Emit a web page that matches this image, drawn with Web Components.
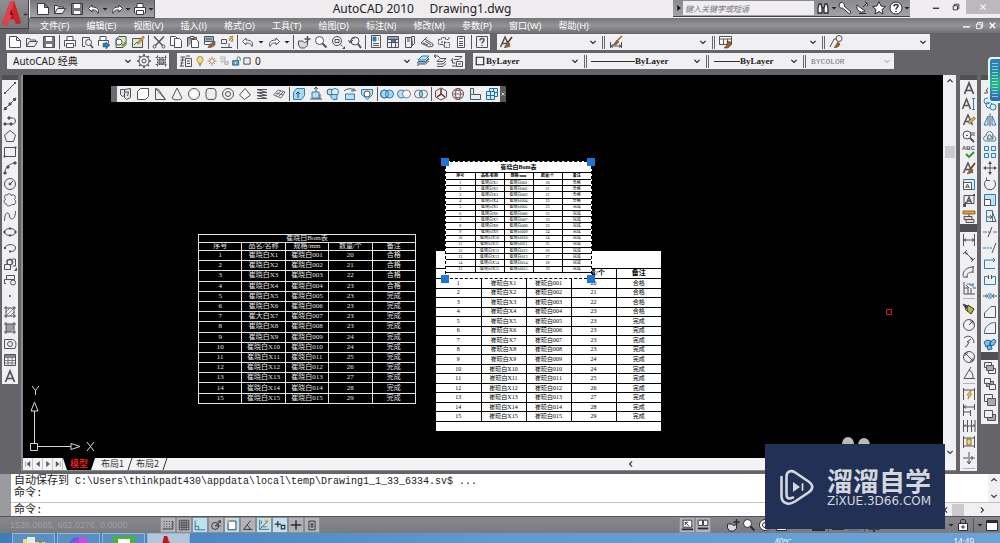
<!DOCTYPE html>
<html lang="zh-CN">
<head>
<meta charset="utf-8">
<meta name="viewport" content="width=device-width, initial-scale=1">
<title>AutoCAD 2010 Drawing1.dwg</title>
<style>
  html, body { margin: 0; height: 100%; overflow: hidden; background: #656468; }
  body { font-family: "Noto Sans", "Noto Sans CJK SC", sans-serif; font-size: 10px; color: #222; }
</style>
</head>
<body>
<cad-app></cad-app>

<script>
/* ---------- icon library: 16 x 16 line drawings ---------- */
const page = '<path d="M2.500 2.500h7l4 4v7h-11zM9.500 2.500v4h4" fill="#fff"/>';
const brush = '<path d="M14 3L9.500 9" stroke="#5a3a1c" stroke-width="1.500"/><path d="M10 8l2 2c-1 3-4 4-6 3.500 2-1 2-4 4-5.500z" fill="#a0622c" stroke="#5a3a1c" stroke-width=".6"/>';
const mag = '<circle cx="6.500" cy="6.500" r="4" fill="#fff"/><path d="M9.500 9.500l4 4" stroke-width="2"/>';
const A = '<path d="M2.500 13L7 3l4.500 10M4 9.500h6" stroke-width="1.500"/>';
const ICONS = {
  new: page,
  open: '<path d="M2.500 12.500v-8h3l1 1.500h5v2M2.500 12.500l3-5h8l-3 5z" fill="#e9edf2"/>',
  save: '<path d="M2.500 2.500h11v11h-11z" fill="#77777e"/><path d="M5 3h6v4H5zM5 10h6v3H5z" fill="#fff" stroke="none"/>',
  undo: '<path d="M6 4L2.500 7.500 6 11V9c4-.5 5 1 6 3.500C13.500 8 10.500 6 6 6z" fill="#fff"/>',
  redo: '<path d="M10 4l3.500 3.500L10 11V9c-4-.5-5 1-6 3.500C2.500 8 5.500 6 10 6z" fill="#fff"/>',
  print: '<path d="M5 6V2.500h6V6M3.500 12h-1V6.500h11V12h-1" fill="#fff"/><path d="M4.500 9.500h7v4h-7z" fill="#fff"/>',
  preview: '<path d="M10.500 3.500h-7v9H6M10.500 3.500v2" /><circle cx="9.500" cy="8.500" r="3"/><path d="M11.500 11l2.500 3" stroke-width="1.800"/>',
  publish: '<path d="M4 6V2.500h6V6M3 11.500h-.5V6.500h10V9" fill="#fff"/><path d="M7 9v4h3v2l4-4-4-3v1z" fill="#2a7fb4" stroke="#1a5a8a" stroke-width=".5"/>',
  dwf: '<path d="M3 5l3-2.500h7v8l-3 3H3z" fill="#dfe8c8"/><circle cx="6" cy="8" r="3" fill="#fff"/><path d="M9 12l4-4" stroke="#6f9a2c" stroke-width="2"/>',
  markup: '<path d="M2.500 4.500h10v9h-10z" fill="#d6e8da"/><path d="M4 11l3-3 2 2" stroke="#38853c"/><path d="M7 9l6-7 1.500 1.500-6 6.500z" fill="#e0a63a" stroke="#8a5a1a" stroke-width=".6"/>',
  cut: '<path d="M3 2.500l8.500 9M13 2.500L4.500 11.500" stroke-width="1.400"/><circle cx="3.500" cy="12.500" r="1.500"/><circle cx="12.500" cy="12.500" r="1.500"/>',
  copy: '<path d="M2.500 2.500h5l2 2v7h-7z" fill="#fff"/><path d="M6.500 4.500h5l2 2v7h-7z" fill="#fff"/>',
  paste: '<path d="M3 12.500h-.5v-9h9V5" fill="#a6a6ac"/><path d="M5 2.500h4v2H5z" fill="#fff"/><path d="M6.500 5.500h5l2 2v6h-7z" fill="#fff"/>',
  match: '<path d="M2.500 2.500h9v5h-9zM4 5h6" fill="#8cb9d6"/><path d="M2.500 7.500h9v3h-9z" fill="#fff"/><path d="M8 10l5-3v4c-2 2-5 3-7 2.500z" fill="#a0622c" stroke-width=".6"/>',
  block: '<path d="M2.500 9.500v-4h5v4zM5 13.500h5v-4M2 13.500h11M10 7l4-4M11 2l3 4M13 8V6" /><path d="M10 6l4-4" stroke="#e2a02c" stroke-width="2"/>',
  pan: '<path d="M2.500 7h4l2 1.500 3-1v4l-3 2.500h-4l-2-3z" fill="#dadade"/><path d="M11.500 2v6M8.500 5h6" stroke-width="1.500"/>',
  zoom: mag,
  zoomwin: '<circle cx="7" cy="7" r="4.500"/><path d="M5 5.500h4v3H5zM10.500 10.500l2 2"/><path d="M12 15h3v-3z" fill="currentColor" stroke="none"/>',
  zoomprev: '<circle cx="8" cy="7" r="4"/><path d="M11 10l3 4" stroke-width="2"/><path d="M6 6L3 9 1.500 6" /><path d="M3 9c0-3 2-5 5-5"/>',
  props: '<path d="M3.500 1.500h9v12h-9z" fill="#fff"/><path d="M5 3h3v4H5z" fill="#2a7fb4" stroke="#2a7fb4"/><path d="M10 4h1M10 6h1M5 9.500h6M5 11.500h6"/>',
  grid: '<path d="M2.500 2.500h11v11h-11zM2.500 5.500h11M6.500 5.500v8M10.500 5.500v8M2.500 8.500h11" /><path d="M7 6h3v2H7z" fill="#2a7fb4" stroke="none"/><path d="M3 3h10v2H3z" fill="#99c" stroke="none"/>',
  palette: '<path d="M3.500 3.500h6v10h-6zM9.500 2.500h3v7l-2 2zM5 5h3M5 7h3"/>',
  sheet: '<path d="M2 9l4-4 8 5v2l-4 1zM4 9l5 2M6 7l6 4M6 5l2-2"/>',
  markupset: '<path d="M2.500 5.500h3v-2h4v2h3M2.500 5.500v5h3M8.500 8.500h5v5h-5zM5 8h4M5 10.500h3v3M13 3v3" stroke-dasharray="2 1"/>',
  calc: '<path d="M4.500 2.500h7v11h-7z" fill="#fff"/><path d="M6 4.500h4M6 7.500h4M6 9.500h4M6 11.500h4"/>',
  help: '<path d="M2.500 2.500h11v11h-11z"/><path d="M6 6.500c0-3 4-2.500 4-.5 0 1.500-2 1.500-2 3.500M8 11v1" stroke-width="1.500"/>',
  textstyle: A + brush, dimstyle: '<path d="M2.500 8v6M13.500 8v6M2.500 12h11M5 10.500L2.500 12 5 13.500M11 10.500l2.500 1.500-2.500 1.500"/><path d="M14 2L9 7" stroke="#9a5a22" stroke-width="1.500"/><path d="M9 6l2 2-3 3H5z" fill="#a0622c" stroke-width=".5"/>',
  tablestyle: '<path d="M1.500 2.500h12v8h-12zM1.500 5h12M5.500 5v5.500M9.500 5v5.500" fill="#fff"/><path d="M9 7l4 1v3l-3 3H6l3-3z" fill="#a0622c" stroke="#5a3a1c" stroke-width=".6"/>',
  leader: '<path d="M2 13l4-8h3"/><circle cx="11" cy="4.500" r="3"/><path d="M10 8l2 2c-1 3-4 4-6 3.500 2-1 2-4 4-5.500z" fill="#a0622c" stroke="#5a3a1c" stroke-width=".6"/>',
  gear: '<circle cx="8" cy="8" r="2"/><circle cx="8" cy="8" r="5"/><path d="M8 1v2M8 13v2M1 8h2M13 8h2M3 3l1.500 1.500M11.500 11.500L13 13M13 3l-1.500 1.500M3 13l1.500-1.500" stroke-width="1.600"/>',
  workspace: '<path d="M2.500 4.500h11M4.500 2.500v11M2.500 11.500h11M12.500 2.500v11" stroke-dasharray="2 1"/><path d="M6 6h5v5H6z" fill="#9a9aa0"/>',
  layers: '<path d="M2.500 4h5M2.500 7h4M2.500 10h3M2 13h4M5 4L3 13M7.500 5.500h6v8h-6zM9 8h3M9 10.500h3M8 3h4"/>',
  bulb: '<path d="M6 11c0-2-2-3-2-5a4 4 0 018 0c0 2-2 3-2 5z" fill="#f7dc7a" stroke="#8a742a"/><path d="M6.500 12.500h3M7 14.500h2"/>',
  sun: '<circle cx="8" cy="8" r="3" fill="#fff3cf" stroke="#8a6a3a"/><path d="M8 2v2M8 12v2M2 8h2M12 8h2M4 4l1 1M11 11l1 1M12 4l-1 1M4 12l1-1" stroke="#8a6a3a"/>',
  freeze: '<path d="M3.500 2.500h6v3h-6zM3.500 8.500h5v-3M5 8v3M9.500 8.500h4v4h-4z" stroke="#aaa7ae"/><circle cx="11" cy="11" r="2" stroke="#aaa7ae"/>',
  unlock: '<path d="M3.500 7.500h8v6h-8z" fill="#5fa4cf" stroke="#1b4f78"/><path d="M9.500 7V4c0-2 4-2 4 0v4"/><path d="M7.500 9v3" stroke="#fff"/>',
  square: '<path d="M3 3h10v10H3z" stroke-width="1.500"/>',
  layerstack: '<path d="M3 7l4-4h7l-4 4z" fill="#b9e0f3" stroke="#2a7fb4"/><path d="M2.500 10l1-1.500h7L14 5M2.500 13l1-2h7L14 8" fill="none"/><path d="M2 10h8l4-4" stroke="#2a7fb4"/>',
  layerprev: '<path d="M2 3h4l2 2M4 1.500L2 3l2 2M8 5.500h6l-3 3H5zM5 11h6l3-3M5 13.500h6l3-3"/>',
  layerstate: '<path d="M6 3.500h7l-3 3H5M3.500 7v3h3M7.500 8.500h6v5h-6zM9 11h3M3 13h4M4 5l-2 3"/>',
  polysolid: '<path d="M2.500 3.500h4v6l-2 1-2-2zM6.500 3.500l6-1v9l-4 2-2-2V6h4l-1 4" fill="#e4e4e8"/>',
  boxs: '<path d="M2.500 5.500l3-3h8v8l-3 3h-8z" fill="#fff"/>' , wedge: '<path d="M3.500 2.500v11h10zM3.500 2.500l3 1 7 10"/>',
  cone: '<path d="M8 2L3 12c1 2.500 9 2.500 10 0z" fill="#eee"/>', sphere: '<circle cx="8" cy="8" r="5.500" fill="#fff"/>',
  cylinder: '<rect x="3" y="2.500" width="10" height="11" rx="3" fill="#eeeef0"/>', torus: '<circle cx="8" cy="8" r="5.500"/><circle cx="8" cy="8" r="2.500"/>',
  pyramid: '<path d="M8 2.500L2.500 9l5 4.500 6-4.500z" fill="#f8f8f8"/>',
  helix: '<path d="M3 3.500h10M3 6.500h10M3 9.500h10M3 12.500h10M3 3.500l10 3M3 6.500l10 3M3 9.500l10 3"/>',
  planar: '<path d="M2.500 9L7 4l7 2-4 6zM5 9.500L10 5M7.500 10.500L12 6M5 7l7 2" stroke-width=".8"/>',
  extrude: '<path d="M2.500 6.500l3-4h8v7l-3 4h-8z" fill="#a8d8f0" stroke="#2a7fb4"/><path d="M7 6v6M5 8l2-2 2 2" stroke="#155"/>',
  presspull: '<path d="M4 6h7v6H4z" fill="#b9e0f3" stroke="#2a7fb4"/><path d="M8 1v5M6 3l2-2 2 2M2 13h12M12 8v5"/>',
  sweep: '<circle cx="5" cy="6" r="3" fill="#b9e0f3"/><circle cx="10" cy="6" r="3.500" fill="#dff0f8" stroke="#2a7fb4"/><path d="M6 8.500h6v5H8l-2-2z" fill="#a8d8f0" stroke="#2a7fb4"/>',
  revolve: '<path d="M3.500 8h9v5.500h-9z" fill="#b9e0f3" stroke="#2a7fb4"/><path d="M2 5c3-3 9-3 12 0M12 2.500V5h-3"/>',
  loft: '<path d="M2.500 3.500h11v5l-5 5-6-5z" fill="#b9e0f3" stroke="#2a7fb4"/><circle cx="8" cy="8" r="3" fill="#fff"/>',
  union: '<circle cx="5.500" cy="8" r="4" fill="#a8d8f0" stroke="#2a7fb4"/><circle cx="10.500" cy="8" r="4" fill="#a8d8f0" stroke="#2a7fb4"/><circle cx="5.500" cy="8" r="4" stroke="#2a7fb4"/>',
  subtract: '<circle cx="5.500" cy="8" r="4" fill="#b9e0f3" stroke="#2a7fb4"/><circle cx="10.500" cy="8" r="4" fill="#f8f8f8" stroke="#77808a"/>',
  intersect: '<circle cx="5.500" cy="8" r="4" stroke="#66707a"/><circle cx="10.500" cy="8" r="4" stroke="#66707a"/><ellipse cx="8" cy="8" rx="1.500" ry="3" fill="#a8d8f0" stroke="#2a7fb4"/>',
  ucs3d: '<path d="M8 2l5.500 3v6L8 14l-5.500-3V5z"/><path d="M8 3v5l-4 3M8 8l4 3" stroke="#7b2020" stroke-width="1.500"/>',
  orbit: '<circle cx="8" cy="8" r="5.500" stroke="#555"/><ellipse cx="8" cy="8" rx="2.500" ry="5.500" stroke="#a33"/><path d="M2.500 8h11M4 4.500h8M4 11.500h8" stroke="#777"/>',
  section: '<path d="M3.500 2.500h3v6h7v5h-10z" fill="#e2f1f8"/><path d="M3.500 8.500h3" stroke="#2a7fb4"/>',
  viewcube: '<path d="M5.500 2.500h8v8h-8z" stroke="#216fa8" fill="#d4ecf8"/><path d="M2.500 5.500h8v8h-8zM2.500 9.500h8M6.500 5.500v8M9.500 2.500v3M10.500 6.500h3" stroke="#216fa8" fill="#d4ecf8"/>',
  line: '<path d="M3 13L13 3"/><path d="M2 12h2v2H2zM12 2h2v2h-2z" fill="currentColor" stroke="none"/>',
  xline: '<path d="M3 13L13 3"/><path d="M2 14l1-3 2 2zM14 2l-1 3-2-2zM7 7h2v2H7z" fill="currentColor"/>',
  pline: '<path d="M2.500 12h8c4 0 4-6 0-6h-4"/><path d="M2 11h2v2H2zM8 11h2v2H8zM6 5h2v2H6z" fill="currentColor"/>',
  polygon: '<path d="M8 2.500L13.500 7l-2 6.500h-7L2.500 7z"/>',
  rect: '<path d="M2.500 3.500h11v9h-11z"/><path d="M1.500 11.500h2v2h-2zM12.500 2.500h2v2h-2z" fill="currentColor" stroke="none"/>',
  arc: '<path d="M3 13C3 8 6 4 13 3"/><path d="M2 12h2v2H2zM5 6h2v2H5zM12 2h2v2h-2z" fill="currentColor"/>',
  circle: '<circle cx="8" cy="8" r="5.500"/><path d="M8 8l3-3"/><circle cx="8" cy="8" r="1" fill="currentColor"/>',
  cloud: '<path d="M5 3c2-2 4-1 4 .5 3-2 6 1 3.500 4 2.500 2 1 6-3 5-1 2-5 2-5-.5-3 0-3-4-1-4.500C1.500 5 2.500 2.500 5 3z"/>',
  spline: '<path d="M2.500 13c0-5 1-8 3-8 3 0 1 6 4 6s4-4 4-8"/>',
  ellipse: '<ellipse cx="8" cy="8" rx="5.500" ry="3.500"/><path d="M7 4h2v1H7zM7 11h2v1H7zM2 7h1v2H2zM13 7h1v2h-1z" fill="currentColor"/>',
  ellarc: '<path d="M3 8c1-5 11-4 10.500 0 0 3-3 3.500-5.500 3.500"/><path d="M2 7h2v2H2zM7 10.500h2v2H7z" fill="currentColor" stroke="none"/>',
  insert: '<path d="M2.500 8.500h6v5h-6zM5 8V4h5v4M10.500 3h3v7h-3"/><circle cx="8" cy="6" r="3"/><path d="M12 15h3v-4z" fill="currentColor" stroke="none"/>',
  makeblock: '<path d="M4 11.500H2.500v-4h2M4.500 3.500h8v4h-8z"/><circle cx="11" cy="10.500" r="2.500"/>',
  point: '<path d="M7.500 7.500h1v1h-1z" fill="currentColor"/>',
  hatch: '<path d="M2 4h12M4 2v12M2 12h12M12 2v12"/><path d="M4 8l4-4M4 12l8-8M8 12l4-4" stroke-width=".6"/>',
  gradient: '<path d="M4 4h8v5l-3 3H4z" fill="#9a9ea6" stroke="none"/><path d="M2 4h12M4 2v12M2 12h12M12 2v12"/>',
  region: '<path d="M2.500 3.500h8c4 1 4 5 2.500 9h-10.500z"/><circle cx="8" cy="8" r="2.500"/>',
  table: '<path d="M2.500 5.500h11M2.500 8.500h11M2.500 11h11M6 5.500v8M10 5.500v8" stroke-width=".7"/><path d="M2.500 2.500h11v11h-11z"/><path d="M3 3h10v2H3z" fill="#88888e" stroke="none"/>',
  mtext: '<path d="M3.500 14L8 3l4.500 11M5 10.500h6" stroke-width="1.700"/>',
  dtext: '<path d="M1.500 13L5.500 3l4 10M3 9.500h5" stroke-width="1.500"/><path d="M12.500 3v10M11 2.500h3M11 13.500h3" stroke="#2a7fb4"/>',
  edittext: A + '<path d="M7 10l6-5 1.500 1.500L8.500 12z" fill="#e3b45a" stroke="#6a4a1a" stroke-width=".7"/>',
  find: '<circle cx="6" cy="7" r="4"/><path d="M9 10l4 4" stroke-width="2"/><path d="M5 7.500h2M9 5h5M9 7h5"/>',
  spell: '<text x="1" y="6" font-family="Liberation Sans" font-weight="bold" font-size="6" fill="currentColor" stroke="none">ABC</text><path d="M5 10l3 3 5-5" stroke="#2f8f36" stroke-width="1.800"/>',
  tstyle: A + brush,
  scaletext: '<path d="M2.500 3.500h11v10h-11z" fill="#d8eef8" stroke="#2a7fb4"/><path d="M2.500 6.500h8v7h-8z" fill="#fff"/><path d="M4.500 12L6.500 8l2 4M5 11h3"/>',
  justify: '<path d="M3 3.500h10v8H3zM2 13l3-3"/><path d="M5.500 11L8 5l2.500 6M6.500 9h3" stroke-width="1.300"/><path d="M2 12h3v3H2zM12 2h2v2h-2z" fill="currentColor" stroke="none"/>',
  space: '<path d="M2 3h12v3H2z" fill="#d9a24a" stroke="#9a6a2a"/><path d="M3 8.500h8v3H3zM5 11.500h8v3H5z" fill="#d8dce0"/><path d="M8 6v3"/>',
  dimlin: '<path d="M2.500 2v12M13.500 2v12M3 8h10M5 6.500L3 8l2 1.500M11 6.500L13 8l-2 1.500"/>',
  dimali: '<path d="M4 4l8 8M2 6l4-4M10 14l4-4"/><path d="M4 4l3 1-2 2zM12 12l-3-1 2-2z" fill="currentColor" stroke="none"/>',
  dimarc: '<path d="M2 12C2 6 6 3 13 3M6 13c0-4 2-5 6-5M12 2v7M2 13h5"/>',
  dimord: '<path d="M3 2v12h11M3 8h4v6M10 14V8M12 8h3M9 5h3M5 5l3 3" /><path d="M6 4h4M12 3v4" stroke="#2a7fb4"/>',
  qdim: '<path d="M7 4l6 4-3 5c-2-2-4-2-4-5z" fill="#b9b832" stroke="#333"/><path d="M2 3l5 2-2 3zM4 8l3 3" fill="#333"/>',
  dimrad: '<circle cx="8" cy="8" r="5.500"/><path d="M8 8l4-4M9 4h3v3"/>',
  dimjog: '<path d="M3 5c4-4 10-1 10 5M6 13l2-4h-2l4-3M4 14l2-1"/>',
  dimdia: '<circle cx="8" cy="8" r="5.500"/><path d="M4 4l8 8M4 7V4h3M12 9v3H9"/>',
  dimang: '<path d="M10 2L3 13.500h11M8 5c3 1 4 4 4 8"/>',
  quick: '<path d="M2.500 2v12M13.500 2v12M3 4h10"/><path d="M9 5L6 9h2l-1 4 4-5H9l1-3z" fill="#f3ca55" stroke="#a37618" stroke-width=".7"/>',
  base: '<path d="M2.500 2v12M2.500 5h11M2.500 10h7M13.500 2v6M9.500 8v6M5 3.500L3 5l2 1.500"/>',
  cont: '<path d="M2.500 2v12M6.500 2v12M10.500 2v12M14 2v12M3 8h11M5 6.500L3 8M12 6.500L14 8"/>',
  dspace: '<path d="M2.500 2v12M13.500 2v12M2.500 4h11M2.500 12h11"/><path d="M6 5h4v6H6z" fill="#f0d78a" stroke="#8a6a2a"/>',
  dbreak: '<path d="M2 8h5M9 8h5M8 2v11M6 11l2 3 2-3M11 6v4"/>',
  cpy: '<circle cx="5" cy="5" r="3" stroke="#2a7fb4"/><circle cx="7" cy="9" r="3" stroke="#2a7fb4"/><circle cx="11" cy="11" r="3" stroke="#2a7fb4" fill="#d8eef8"/>',
  erase: '<path d="M2 13h6M4 11l5-8 4 3-5 7z" fill="#ddd"/>',
  mirror: '<path d="M8 1.500v13"/><path d="M6 4v9H2zM10 4v9h4z" stroke="#2a7fb4" fill="#d8eef8"/>',
  offset: '<path d="M3 13h10c2-3 0-5-2-5 0-6-7-6-7 0-3 0-3 4-1 5z" stroke="#2a7fb4"/><path d="M5 11h6V9H9c0-3-3-3-3 0z"/>',
  array: '<path d="M2.500 2.500h4v4h-4zM9.500 2.500h4v4h-4zM2.500 9.500h4v4h-4zM9.500 9.500h4v4h-4z" stroke="#2a7fb4" fill="#d8eef8"/>',
  move: '<path d="M8 2v12M2 8h12"/><path d="M6 4l2-3 2 3zM6 12l2 3 2-3zM4 6L1 8l3 2zM12 6l3 2-3 2z" fill="currentColor" stroke="none"/>',
  rotate: '<path d="M4.500 4a5.500 5.500 0 107 0M4.500 1.500V4.500H8"/>',
  scale: '<path d="M2.500 2.500h11v11h-11z" fill="#bfe3f4" stroke="#2a7fb4"/><path d="M2.500 7.500h6v6h-6z" fill="#fff"/>',
  stretch: '<path d="M4.500 2.500h6v11h-6z" stroke="#2a7fb4"/><path d="M10 3l4 10.500h-4M5 9h5M8 7l2 2-2 2"/>',
  trim: '<path d="M1 8h4M11 8h4" stroke="#2a7fb4"/><path d="M6 8h1M8 8h1M6 13l4-10"/>',
  extend: '<path d="M1 8h3M5 8h2M8 8h2" stroke="#2a7fb4"/><path d="M10 13l4-10"/>',
  breakat: '<path d="M13 4H2.500v8.500H13M11 2l2 2-2 2" stroke="#2a7fb4"/>',
  break: '<path d="M5 4.500H2.500v8h11v-8H11" stroke="#2a7fb4"/><path d="M6.500 3v4M9.500 3v4M5 5h1M10 5h1"/>',
  join: '<path d="M1 8h5M10 8h5" /><path d="M7 5v6M9 5v6M4 6l2 2-2 2M12 6l-2 2 2 2" stroke="#2a7fb4"/>',
  chamfer: '<path d="M2.500 9v4.500h11v-11H9" stroke="#555"/><path d="M9 2.500L2.500 9" stroke="#2a7fb4"/>',
  fillet: '<path d="M2.500 13.500h11v-11"/><path d="M2.500 13.500C2 7 7 2.500 13.500 2.500" stroke="#2a7fb4"/>',
  explode: '<path d="M2 6l3-2 4 1-1 4-4 2zM8 6l4-3 2 2-2 4-4 1zM5 10l4-1 1 4-4 1z" stroke="#1c6a9c" fill="#7cc0e4"/>',
  front: '<path d="M2.500 2.500h7v5h-7zM6.500 8.500h7v5h-7z"/><path d="M4.500 5.500h7v5h-7z" fill="#aaaab0"/>',
  back: '<path d="M4.500 5.500h7v5h-7z" fill="#aaaab0"/><path d="M2.500 2.500h6v5h-6zM7.500 8.500h6v5h-6z" fill="#f0eff1"/>',
  above: '<path d="M2.500 2.500h8v7h-8z"/><path d="M5.500 6.500h8v7h-8z" fill="#aaaab0"/>',
  below: '<path d="M5.500 6.500h8v6h-8z" fill="#aaaab0"/><path d="M2.500 2.500h8v7h-8z" fill="#f0eff1"/>',
  snap: '<path d="M3 4h10M3 7h10M3 10h10" stroke-dasharray="1 2"/><path d="M2 12.500h11.500v-9"/>',
  gridmode: '<path d="M2.500 2.500h11v11h-11zM5.500 2.500v11M8 2.500v11M10.500 2.500v11M2.500 5.500h11M2.500 8h11M2.500 10.500h11" stroke-width=".8"/>',
  ortho: '<path d="M2.500 3v10.500H14M2.500 9.500h4v4" stroke="#2a6a94"/>',
  polar: '<circle cx="7" cy="9" r="4"/><path d="M7 9l6-5M7 9h6M10 4l3-1v3"/>',
  osnap: '<path d="M3.500 3.500h9v10h-9z" fill="#fff"/><path d="M2 2h3v3H2z" fill="#e6b34b" stroke="none"/>',
  otrack: '<path d="M13 13H3l8-10M10 13c0-2-1-3-3-5"/>',
  ducs: '<path d="M3 2v11h11M3 13l8-8M5 3v4M5 10h6" stroke="#4c6b7c"/><path d="M11 2v4M9 4h4" stroke="#e09c24" stroke-width="2"/>',
  dyn: '<path d="M2 7h7M5.500 3.500v7M9.500 8.500h4v4h-4z" stroke-width="1.300"/>',
  lwt: '<path d="M2 8h12M8 2.500v11" stroke-width="1.700"/>',
  qp: '<path d="M4.500 3.500h7v10h-7z"/><path d="M7 6.500h2v4H7z"/>',
  model: '<path d="M3.500 2.500h10v8h-10z" fill="#f7f7f7"/><path d="M2 13h13" stroke-width="2"/><path d="M6 5l4 4M6 8V5h3"/>',
  layout: '<path d="M2.500 2.500h5v6h-5zM8.500 2.500h5v6h-5z" fill="#f7f7f7"/><path d="M2 12h12" stroke-width="2"/>',
  wheel: '<circle cx="8" cy="8" r="5.500" fill="#fff"/><circle cx="8" cy="8" r="2.500"/>',
  motion: '<path d="M3.500 3.500h10v10h-10zM5 6h7M5 11h7" fill="#fff"/>',
  lock: '<path d="M3.500 6.500h9v7h-9z" fill="#fff"/><path d="M5.500 6V3.500c0-1.500 5-1.500 5 0V6M8 8v4M6 10h4"/>',
  clean: '<path d="M2.500 3.500h11v10h-11z" fill="#fff"/><path d="M3 5h10" stroke-width="2"/>',
  bino: '<path d="M3 13V8l1-4h2l1 4v5zM9 13V8l1-4h2l1 4v5zM7 8h2" fill="#fff" stroke-width="1.300"/>',
  key: '<path d="M3 3c3-2 5 1 4 3l7 6-1.500 2L5.500 8C3 9 1 6 3 3z" fill="#fff"/>',
  dish: '<path d="M3 5l8 6c-5 3-9-1-8-6zM9 7l4-4M5 13.500h7M11 2c2 0 3 2 2.500 4" fill="#fff"/>',
  star: '<path d="M8 1.500l2 4.500 4.500.5-3.500 3 1 4.500-4-2.500-4 2.500 1-4.500-3.500-3L6 6z" fill="#fff"/>',
  q: '<circle cx="8" cy="8" r="6" fill="#fff"/><path d="M6 6.500c0-3 4-2.500 4-.5 0 1.500-2 1.500-2 3.500M8 11v1" stroke-width="1.500"/>',
  min: '<path d="M3 10h10" stroke-width="2"/>',
  restore: '<path d="M5.500 6V3.500h7v7H10M3.500 6h7v6.500h-7z" stroke-width="1.300"/>',
  close: '<path d="M4 4l8 8M12 4l-8 8" stroke-width="1.800"/>',
  up: '<path d="M4.500 9.500L8 6l3.500 3.500" stroke-width="1.500"/>', down: '<path d="M4.500 6.500L8 10l3.500-3.500" stroke-width="1.500"/>',
  left: '<path d="M9.500 4.500L6 8l3.500 3.500" stroke-width="1.500"/>', right: '<path d="M6.500 4.500L10 8l-3.500 3.500" stroke-width="1.500"/>',
  caret: '<path d="M3 6h10l-5 5z" fill="currentColor" stroke="none"/>',
  first: '<path d="M3.500 3v10"/><path d="M12 3v10L6 8z" fill="currentColor"/>', prev: '<path d="M11 3v10L5 8z" fill="currentColor"/>',
  next: '<path d="M5 3v10l6-5z" fill="currentColor"/>', last: '<path d="M12.500 3v10"/><path d="M4 3v10l6-5z" fill="currentColor"/>'
};

/* ---------- small helper: one class per element, markup from a template ---------- */
function define(name, markup, ready) {
  const tpl = document.createElement('template');
  if (typeof markup === 'string') tpl.innerHTML = markup;
  customElements.define(name, class extends HTMLElement {
    constructor() { super(); this.attachShadow({ mode: 'open' }); }
    connectedCallback() {
      if (this.shadowRoot.childNodes.length) return;
      if (typeof markup === 'function') this.shadowRoot.innerHTML = markup(this);
      else this.shadowRoot.append(tpl.content.cloneNode(true));
      if (ready) ready(this);
    }
  });
}

define('cad-icon', el => `
  <style>
    :host { display: block; width: var(--icon, 16px); height: var(--icon, 16px); flex: none; }
    svg { display: block; width: 100%; height: 100%; overflow: visible; }
  </style>
  <svg viewBox="0 0 16 16" fill="none" stroke="currentColor" aria-hidden="true">${ICONS[el.getAttribute('name')] || ''}</svg>`);

/* A run of tool buttons. "|" is a divider, "v" a flyout arrow, "*" marks a pressed button. */
define('tool-strip', el => `
  <style>
    :host { display: flex; align-items: center; flex: none; background: var(--panel, #f0eff1); color: var(--ink, #515157); --icon: 16px; }
    :host([vertical]) { flex-direction: column; }
    button { display: flex; align-items: center; justify-content: center; flex: none; width: var(--w, 17px); height: 16px;
      margin: 0; padding: 0; border: 0; background: none; color: inherit; }
    button.on { background: #bfe2f0; }
    button.v { width: var(--caret, 9px); --icon: 8px; color: #222; }
    i { flex: none; width: 1px; height: 14px; margin: 0 var(--gap, 1px) 0 2px; background: #55555a; }
    :host([vertical]) i { width: 12px; height: 1px; margin: 2px 0; background: #b5b4b8; }
    :host([boxed]) button { box-shadow: inset 0 0 0 1px #8d8c90; background: #b3b2b5; }
    :host([boxed]) button.on { background: #bfe2f0; }
    :host([boxed]) { --icon: 14px; }
  </style>` + el.getAttribute('items').trim().split(/\s+/).map(t =>
    t === '|' ? '<i></i>' :
    t === 'v' ? '<button class="v" aria-label="more"><cad-icon name="caret"></cad-icon></button>' :
    `<button class="${t[0] === '*' ? 'on' : ''}" aria-label="${t.replace('*', '')}"><cad-icon name="${t.replace('*', '')}"></cad-icon></button>`).join(''));

/* Drop-down with an optional leading slot (colour swatch, line sample, layer state icons). */
define('cad-select', el => `
  <style>
    :host { display: flex; align-items: center; height: 16px; flex: none; background: #f0eff1; color: #222; box-sizing: border-box; }
    label { display: flex; align-items: center; flex: 1; min-width: 0; height: 16px; }
    select { appearance: none; flex: 1; min-width: 0; height: 16px; margin: 0; padding: 0 0 0 var(--lead, 3px); border: 0; background: none;
      font: inherit; color: inherit; opacity: 1; }
    .arrow { --icon: 12px; margin-right: 1px; }
    :host([disabled]) { color: #77767a; }
    :host([disabled]) .arrow { color: #b9b8bc; }
  </style>
  <label><slot></slot>
    <select aria-label="${el.getAttribute('label')}" ${el.hasAttribute('disabled') ? 'disabled' : ''}><option>${el.getAttribute('value') || ''}</option></select>
    <cad-icon class="arrow" name="down"></cad-icon></label>`);

define('double-rule', `<style>:host { display: block; flex: none; width: 1px; height: 13px; margin: 0 2px; border: solid #66656a; border-width: 0 1px; }</style>`);

define('app-logo', `
  <style>
    :host { display: block; }
    button { display: flex; align-items: center; width: 29px; height: 29px; padding: 0 0 0 2px; border: 0; border-right: 1px solid #444;
      border-bottom: 1px solid #444; background: linear-gradient(#8f8e91, #77767a); color: #222; --icon: 7px; }
    svg { width: 20px; height: 26px; flex: none; }
  </style>
  <button aria-label="Application menu">
    <svg viewBox="0 0 20 26" aria-hidden="true">
      <path d="M8 1l4-1 7 22-5 1-2-5-6 1-1 6-5-2z" fill="#b81820"/>
      <path d="M8 1l4-1 1 5-5 14-3 6-5-2z" fill="#e4404a"/>
      <path d="M9 8l2 6H8z" fill="#5d0b10"/><path d="M12 0l7 22-5 1-4-12z" fill="#cf232c"/>
    </svg><cad-icon name="caret"></cad-icon>
  </button>`);

define('title-bar', `
  <style>
    :host { display: flex; height: 18px; background: #efedf0; }
    .quick { height: 17px; padding-left: 4px; margin-left: 1px; background: linear-gradient(#77767a, #a5a4a7); --panel: none; --ink: #3a3a3e; --caret: 6px; border-bottom: 1px solid #444; border-right: 1px solid #555; }
    h1 { flex: 1; margin: 0; padding-left: 16px; text-align: center; font: 12px/18px "Noto Sans", sans-serif; color: #222; white-space: pre; }
    .info { display: flex; align-items: center; height: 17px; background: linear-gradient(#8b8a8e, #a3a2a5); border-bottom: 1px solid #444; color: #111; --icon: 8px; box-sizing: border-box; padding-left: 2px; }
    .info tool-strip { --panel: none; --caret: 5px; --ink: #2c2c30; padding: 0 1px 0 0; }
    input { width: 131px; height: 14px; box-sizing: border-box; margin: 0; padding: 0 2px; border: 0; background: #efedf0; font: italic 8px "Noto Sans CJK SC", sans-serif; }
    input::placeholder { color: #77767a; opacity: 1; }
    .win { display: flex; align-items: flex-start; margin-left: 16px; }
    .win button { display: flex; justify-content: center; align-items: center; width: 20px; height: 14px; padding: 0; border: 0; background: none; color: #222; --icon: 10px; }
    .win .x { width: 34px; background: #bbb9bd; color: #f4f4f4; }
  </style>
  <tool-strip class="quick" items="new open save undo v redo v print v"></tool-strip>
  <h1>AutoCAD 2010     Drawing1.dwg</h1>
  <div class="info"><cad-icon name="next"></cad-icon><input type="search" aria-label="搜索" placeholder="键入关键字或短语">
    <tool-strip items="bino v key dish star q v"></tool-strip></div>
  <div class="win"><button aria-label="Minimize"><cad-icon name="min"></cad-icon></button><button aria-label="Restore"><cad-icon name="restore"></cad-icon></button><button class="x" aria-label="Close"><cad-icon name="close"></cad-icon></button></div>`);

define('menu-bar', `
  <style>
    :host { display: flex; align-items: center; height: 15px; padding-left: 3px; background: linear-gradient(#77767a, #949396 50%, #717075); }
    nav { display: flex; flex: 1; gap: 1px; }
    nav button { padding: 0 8px; border: 0; margin: 0; background: none; color: #fff; font: 9px/14px "Liberation Sans", "Noto Sans CJK SC", sans-serif; white-space: nowrap; }
    .doc { display: flex; }
    .doc button { width: 13px; height: 14px; padding: 0; border: 0; background: none; color: #fff; --icon: 11px; }
  </style>
  <nav aria-label="菜单"></nav>
  <div class="doc"><button aria-label="Minimize drawing"><cad-icon name="min"></cad-icon></button><button aria-label="Restore drawing"><cad-icon name="restore"></cad-icon></button><button aria-label="Close drawing"><cad-icon name="close"></cad-icon></button></div>`,
  el => {
    el.shadowRoot.querySelector('nav').innerHTML = ['文件(F)', '编辑(E)', '视图(V)', '插入(I)', '格式(O)', '工具(T)', '绘图(D)', '标注(N)', '修改(M)', '参数(P)', '窗口(W)', '帮助(H)']
      .map(t => `<button>${t}</button>`).join('');
  });

define('tool-rows', `
  <style>
    :host { display: flex; flex-direction: column; gap: 3px; padding: 1px 0 6px; background: #656468; }
    div { display: flex; }
    .std { padding-left: 6px; } .std > tool-strip { margin-right: 7px; }
    .std cad-select { width: 86px; }
    .group { display: flex; align-items: center; background: #f0eff1; }
    .prop { padding-left: 7px; gap: 8px; font: 9px "Liberation Serif", serif; }
    .ws { width: 128px; padding-left: 3px; font: 10px "Noto Sans", "Noto Sans CJK SC", sans-serif; }
    .layer { width: 220px; font: 10px "Noto Sans", sans-serif; }
    .layer cad-icon { --icon: 12px; color: #45454b; }
    .layer .sw { --icon: 10px; }
    .color { width: 109px; } .ltype { width: 115px; } .lweight { width: 90px; } .plot { width: 86px; font: 8px "Liberation Mono", monospace; }
    .bold { font-weight: 700; --lead: 0; }
    .swatch { --icon: 12px; margin-left: 1px; color: #222; }
    hr { width: 44px; margin: 0 0 0 2px; border: 0; border-top: 1px solid #333; }
    .lweight hr { width: 26px; margin-left: 3px; }
  </style>
  <div class="std">
    <tool-strip items="new open save | print preview publish dwf markup | cut copy paste match block | undo v redo v | pan zoom zoomwin zoomprev | props grid palette sheet markupset calc | help"></tool-strip>
    <span class="group">
      <tool-strip items="textstyle"></tool-strip><cad-select label="文字样式"></cad-select><double-rule></double-rule>
      <tool-strip items="dimstyle"></tool-strip><cad-select label="标注样式"></cad-select><double-rule></double-rule>
      <tool-strip items="tablestyle"></tool-strip><cad-select label="表格样式"></cad-select><double-rule></double-rule>
      <tool-strip items="leader"></tool-strip><cad-select label="多重引线样式"></cad-select>
    </span>
  </div>
  <div class="prop">
    <span class="group"><cad-select class="ws" label="工作空间" value="AutoCAD 经典"></cad-select><tool-strip items="gear workspace"></tool-strip></span>
    <span class="group"><tool-strip items="layers"></tool-strip>
      <cad-select class="layer" label="图层" value="0"><cad-icon name="bulb"></cad-icon><cad-icon name="sun"></cad-icon><cad-icon name="freeze"></cad-icon><cad-icon name="unlock"></cad-icon><cad-icon class="sw" name="square"></cad-icon></cad-select>
      <tool-strip items="layerstack layerprev layerstate"></tool-strip></span>
    <span class="group">
      <cad-select class="color bold" label="颜色" value="ByLayer"><cad-icon class="swatch" name="square"></cad-icon></cad-select><double-rule></double-rule>
      <cad-select class="ltype bold" label="线型" value="ByLayer"><hr></cad-select><double-rule></double-rule>
      <cad-select class="lweight bold" label="线宽" value="ByLayer"><hr></cad-select><double-rule></double-rule>
      <cad-select class="plot" label="打印样式" value="BYCOLOR" disabled></cad-select>
    </span>
  </div>`);

/* Bill-of-materials table; the look is chosen by the "kind" attribute.
   The "paper" sheet lies under the clip, so its title and first headings stay empty. */
const QTY = [20, 21, 22, 23, 23, 23, 23, 23, 24, 24, 25, 26, 27, 28, 29];
define('bom-table', el => {
  const kind = el.getAttribute('kind'), model = kind === 'model', under = kind === 'paper';
  const heads = under ? ['', '', '', '数量/个', '备注'] : ['序号', '品名/名称', '规格/mm', '数量/个', '备注'];
  return `
  <style>
    :host { display: block; }
    table { width: 100%; height: 100%; table-layout: fixed; border-collapse: collapse; border: 1px solid var(--ink); color: var(--ink); font: var(--size)/var(--line) "Liberation Serif", "Noto Sans CJK SC", serif; text-align: center; }
    th, td { padding: 0; border: 1px solid var(--ink); font-weight: 400; white-space: nowrap; overflow: hidden; }
    :host([kind=model]) { --ink: #e4e4e4; --size: 7px; --line: 7px; }
    :host([kind=paper]) { --ink: #000; --size: 6px; --line: 7px; }
    :host([kind=clip]) { --ink: #000; --size: 4px; --line: 4px; }
    :host(:not([kind=model])) table { border-style: hidden hidden solid; }
    :host(:not([kind=model])) th { font-weight: 700; }
    :host([kind=paper]) th { font-size: 7px; height: 9px; }
    :host([kind=paper]) .cap { height: 17px; }
    :host([kind=clip]) th { height: 6px; }
    :host([kind=clip]) .cap { height: 10px; font-size: 6px; line-height: 6px; }
  </style>
  <table><thead><tr><th class="cap" colspan="5">${under ? '' : '崔晓白Bom表'}</th></tr>
  <tr>${heads.map(t => `<th>${t}</th>`).join('')}</tr></thead><tbody>${
    QTY.map((q, i) => `<tr><td>${i + 1}</td><td>${model && i === 6 ? '崔大白' : '崔晓白'}X${i + 1}</td><td>崔晓白${String(i + 1).padStart(3, '0')}</td><td>${q}</td><td>${i < 4 ? '合格' : '完成'}</td></tr>`).join('')
  }</tbody></table>`;
});

define('float-bar', `
  <style>
    :host { display: flex; height: 16px; background: #f0eff1; }
    .grip { width: 6px; background: #6b6a6e; }
    tool-strip { --gap: 0px; }
    button { width: 6px; padding: 0; border: 0; background: #5a595d; color: #fff; --icon: 6px; }
  </style>
  <span class="grip"></span>
  <tool-strip items="polysolid boxs wedge cone sphere cylinder torus pyramid helix planar | extrude presspull sweep revolve loft | union subtract intersect | ucs3d orbit section viewcube"></tool-strip>
  <button aria-label="Close toolbar"><cad-icon name="close"></cad-icon></button>`);

/* Model space: a free canvas, so its objects carry their own coordinates. */
define('model-space', `
  <style>
    :host { display: block; position: relative; flex: 1; min-width: 0; min-height: 0; overflow: hidden; background: #000; }
    .obj { position: absolute; }
    float-bar { left: 88px; top: 11px; }
    .bom { left: 175px; top: 159px; width: 218px; height: 170px; }
    .sheet { left: 413px; top: 176px; width: 225px; height: 171px; padding-bottom: 9px; background: #fff; }
    .clip { left: 422px; top: 86px; width: 145px; height: 111px; padding-bottom: 5px; border: 1px dashed #000; background: #fff; }
    .grip { width: 8px; height: 8px; background: #1f74d8; }
    .pick { left: 863px; top: 234px; width: 4px; height: 4px; border: 1px solid #d01818; }
    .ucs { left: 0; bottom: 0; width: 80px; height: 84px; }
    .dots { left: 818px; top: 361px; width: 32px; height: 24px; }
  </style>
  <float-bar class="obj"></float-bar>
  <bom-table class="obj bom" kind="model"></bom-table>
  <bom-table class="obj sheet" kind="paper"></bom-table>
  <bom-table class="obj clip" kind="clip"></bom-table>
  <span class="obj grip" style="left:418px;top:83px"></span><span class="obj grip" style="left:564px;top:83px"></span>
  <span class="obj grip" style="left:418px;top:200px"></span><span class="obj grip" style="left:564px;top:200px"></span>
  <span class="obj pick"></span>
  <svg class="obj ucs" viewBox="0 0 80 84" fill="none" stroke="#d8d8d8">
    <path d="M7.500 69.500h7v7h-7zM11.500 69V37M8 37l3.500-9 3.500 9zM15 72.500h33M48 69.500l9 3-9 3z"/>
    <path d="M9 12l3.500 4.500L16 12M12.500 16.500V21M64 68l7 9M71 68l-7 9"/>
  </svg>
  <svg class="obj dots" viewBox="0 0 32 24" fill="#b9b9b9"><ellipse cx="7" cy="8" rx="6" ry="7"/><ellipse cx="23" cy="9" rx="6" ry="7"/></svg>`);

define('v-scroll', `
  <style>
    :host { display: flex; flex-direction: column; align-items: center; width: 13px; flex: none; background: #f0eff1; color: #333; --icon: 12px; }
    .thumb { width: 10px; height: 12px; margin-top: 59px; background: #cbcacd; }
    .fill { flex: 1; }
    button { padding: 0; border: 0; background: none; color: inherit; }
  </style>
  <button aria-label="Scroll up"><cad-icon name="up"></cad-icon></button><span class="thumb"></span><span class="fill"></span>
  <button aria-label="Scroll down"><cad-icon name="down"></cad-icon></button>`);

define('layout-tabs', `
  <style>
    :host { display: flex; align-items: center; height: 12px; background: #f3f2f4; color: #333; font: 9px/12px "Noto Sans CJK SC", sans-serif; overflow: hidden; border-bottom: 1px solid #8c8b8f; }
    .nav { display: flex; --icon: 8px; color: #555; }
    button { padding: 0; border: 0; background: none; font: inherit; color: inherit; height: 12px; line-height: 12px; }
    .nav button { display: flex; align-items: center; justify-content: center; width: 10px; border-right: 1px solid #c5c4c8; }
    .tab { padding: 0 3px; }
    .tab.on { background: #000; color: #e02020; font-weight: 700; padding: 0 7px; margin-right: 3px; clip-path: polygon(0 0, 100% 0, calc(100% - 4px) 100%, 4px 100%); }
    svg { width: 6px; height: 12px; flex: none; }
    .h { flex: 1; display: flex; --icon: 12px; padding-left: 49%; }
  </style>
  <span class="nav"><button aria-label="First"><cad-icon name="first"></cad-icon></button><button aria-label="Previous"><cad-icon name="prev"></cad-icon></button><button aria-label="Next"><cad-icon name="next"></cad-icon></button><button aria-label="Last"><cad-icon name="last"></cad-icon></button></span>
  <button class="tab on">模型</button><button class="tab">布局1</button><svg viewBox="0 0 6 12"><path d="M5 0L1 12" stroke="#333"/></svg><button class="tab">布局2</button><svg viewBox="0 0 6 12"><path d="M5 0L1 12" stroke="#333"/></svg>
  <span class="h"><cad-icon name="left"></cad-icon></span>`);

define('dock-column', `
  <style>
    :host { display: flex; flex-direction: column; flex: none; width: 17px; background: #656468; --w: 16px; }
    ::slotted(tool-strip) { border-top: 5px solid #504f54; }
    ::slotted(tool-strip:not(:first-child)) { border-top-width: 8px; }
  </style><slot></slot>`);

define('desk-gauge', `
  <style>
    :host { display: block; box-sizing: border-box; border: 2px solid #e8f6fb; border-right: 0; border-radius: 4px 0 0 4px; background: linear-gradient(#2f7fc0, #1f86a8 25%, #28b98a 60%, #2b70b8 90%); padding: 4px 2px; }
    i { display: block; height: 100%; background: repeating-linear-gradient(#bff0d8 0 1px, transparent 1px 3px); opacity: .7; }
  </style><i></i>`);

define('work-area', `
  <style>
    :host { display: flex; flex: 1; min-height: 0; background: #656468; gap: 4px; padding-right: 2px; position: relative; }
    .left { width: 16px; margin-left: 2px; }
    .view { display: flex; flex-direction: column; flex: 1; min-width: 0; border-left: 2px solid #8c8b8f; margin-left: -1px; }
    .row { display: flex; flex: 1; min-height: 0; }
    desk-gauge { position: absolute; right: 0; top: -18px; width: 12px; height: 46px; }
  </style>
  <dock-column class="left"><tool-strip vertical items="line xline pline polygon rect arc circle cloud spline ellipse ellarc insert makeblock point hatch gradient region table mtext"></tool-strip></dock-column>
  <div class="view"><div class="row"><model-space></model-space><v-scroll></v-scroll></div><layout-tabs></layout-tabs></div>
  <dock-column>
    <tool-strip vertical items="mtext dtext edittext find spell tstyle scaletext justify space"></tool-strip>
    <tool-strip vertical items="dimlin dimali dimarc dimord | qdim dimrad dimjog dimdia dimang | quick base cont dspace dbreak |"></tool-strip>
  </dock-column>
  <dock-column>
    <tool-strip vertical items="erase cpy mirror offset array move rotate scale stretch trim extend breakat break join chamfer fillet explode"></tool-strip>
    <tool-strip vertical items="front back above below"></tool-strip>
  </dock-column>
  <desk-gauge></desk-gauge>`);

define('command-window', `
  <style>
    :host { display: flex; margin-top: 3px; height: 42px; background: #fff; color: #222; font: 10px "Liberation Mono", "Noto Sans CJK SC", monospace; border-bottom: 1px solid #555; }
    .grip { width: 11px; flex: none; background: #9b9a9e; }
    .main { flex: 1; min-width: 0; display: flex; flex-direction: column; }
    .log { flex: 1; padding: 1px 0 0 3px; }
    p { margin: 0; line-height: 12px; height: 12px; white-space: pre; }
    .cn { font-size: 11px; }
    .entry { display: flex; height: 13px; border-top: 1px solid #c4c3c6; align-items: center; }
    label { display: flex; flex: 1; align-items: center; padding-left: 3px; line-height: 12px; }
    input { flex: 1; height: 12px; padding: 0; border: 0; background: none; font: inherit; }
    .side { display: flex; flex-direction: column; justify-content: space-between; background: #f0eff1; height: 28px; }
    .top { display: flex; flex: 1; min-height: 0; }
    .hs { display: flex; width: 60px; height: 13px; align-items: center; background: #f0eff1; }
    .hs span { width: 12px; height: 12px; background: #cbcacd; margin-right: 12px; }
    cad-icon { --icon: 12px; color: #333; }
  </style>
  <span class="grip"></span>
  <div class="main">
    <div class="top"><div class="log"><p><span class="cn">自动保存到</span> C:\\Users\\thinkpadt430\\appdata\\local\\temp\\Drawing1_1_33_6334.sv$ ...</p><p class="cn">命令:</p></div>
      <div class="side"><cad-icon name="up"></cad-icon><cad-icon name="down"></cad-icon></div></div>
    <div class="entry"><label><span class="cn">命令:</span><input type="text" aria-label="命令"></label><div class="hs"><cad-icon name="left"></cad-icon><span></span><cad-icon name="right"></cad-icon></div></div>
  </div>`);

define('status-bar', `
  <style>
    :host { display: flex; align-items: center; height: 16px; background: linear-gradient(#88878b, #7b7a7e); font: 9px "Liberation Sans", sans-serif; color: #a09fa3; --w: 16px; --ink: #2c2c30; }
    output { width: 150px; padding-left: 10px; white-space: pre; }
    tool-strip { --panel: #a3a2a6; }
    .fill { flex: 1; }
    .mid { margin-right: 14px; }
    .nav, .end { --panel: none; }
    .nav { padding-right: 21px; }
    .sc { --panel: none; margin-right: 64px; }
  </style>
  <output>1538.0685, 662.0276, 0.0000</output>
  <tool-strip boxed items="snap gridmode *ortho polar *osnap otrack *ducs *dyn lwt qp"></tool-strip>
  <span class="fill"></span>
  <tool-strip class="mid" boxed items="model layout"></tool-strip>
  <tool-strip class="nav" items="pan zoom wheel motion"></tool-strip>
  <tool-strip class="sc" items="model | layout ducs | gear"></tool-strip>
  <tool-strip class="end" items="v lock | v clean"></tool-strip>`);

define('task-bar', `
  <style>
    :host { display: flex; height: 10px; overflow: hidden; background: linear-gradient(90deg, #3f7db8, #5f9ad0 50%, #6ba3d6); color: #fff; font: 8px/10px "Noto Sans", "Noto Sans CJK SC", sans-serif; padding-left: 12px; gap: 2px; }
    button { flex: none; width: 43px; height: 24px; padding: 0; border: 1px solid #8fb9de; background: #5b8fc0; }
    button:last-of-type { background: #b5c6d8; }
    svg { display: block; width: 24px; height: 20px; margin: 2px auto 0; }
    .t { margin-top: 4px; } .temp { margin-left: auto; margin-right: 160px; } .time { margin-right: 26px; }
  </style>
  <button aria-label="Explorer"><svg viewBox="0 0 24 20"><path d="M1 3h8l2 3h12v14H1z" fill="#f1d98b"/><path d="M5 1h8v6H5z" fill="#e8f0d8"/><path d="M17 4h3v8h-3z" fill="#58a060"/></svg></button>
  <button aria-label="Browser"><svg viewBox="0 0 24 20"><circle cx="12" cy="12" r="11" fill="#2f70e8"/><path d="M12 1a11 11 0 0111 11H12z" fill="#d646e8"/><path d="M4 6l8-5v8z" fill="#9c48e0"/></svg></button>
  <button aria-label="Player"><svg viewBox="0 0 24 20"><path d="M1 0h22v20H1z" fill="#4cae3c"/><path d="M6 3h12v17H6z" fill="#fff"/></svg></button>
  <button aria-label="AutoCAD"><svg viewBox="0 0 24 20"><path d="M7 0l3 0 8 16-4 2-6-6-5 6z" fill="#b81820"/><path d="M11 3l4 7" stroke="#fff" opacity=".5"/></svg></button>
  <span class="t temp">40℃</span><span class="t time">14:49</span>`);

define('brand-mark', `
  <style>
    :host { display: flex; align-items: center; box-sizing: border-box; width: 180px; height: 85px; padding-left: 14px; gap: 13px; background: #213054; color: #d3d7df; }
    svg { width: 35px; height: 36px; flex: none; }
    div { display: flex; flex-direction: column; gap: 2px; }
    b { font: 700 26px/26px "Noto Sans CJK SC", sans-serif; white-space: nowrap; }
    a { font: 12px/12px "DejaVu Sans", sans-serif; color: inherit; text-decoration: none; }
  </style>
  <svg viewBox="0 0 35 36" fill="none" stroke="#d3d7df" stroke-width="2.600" stroke-linecap="round">
    <path d="M14 28.500C8 31 7.500 28 7.500 25V7.500c0-5 4-6.500 8-4.500l14 9.500c5 3.500 5 7.500 0 11L16 32.500C9 37 2.500 34 2.500 27V8"/>
    <path d="M14 13v10l7-5z" fill="#d3d7df" stroke="none"/><path d="M23.500 15v6" stroke-width="1.800"/>
  </svg>
  <div><b>溜溜自学</b><a href="#">ZiXUE.3D66.COM</a></div>`);

define('cad-app', `
  <style>
    :host { display: flex; flex-direction: column; height: 100vh; position: relative; overflow: hidden; }
    header { display: flex; background: #656468; }
    .bars { flex: 1; min-width: 0; }
    brand-mark { position: absolute; right: 55px; bottom: 14px; }
  </style>
  <header><app-logo></app-logo><div class="bars"><title-bar></title-bar><menu-bar></menu-bar></div></header>
  <tool-rows></tool-rows>
  <work-area></work-area>
  <command-window></command-window>
  <status-bar></status-bar>
  <task-bar></task-bar>
  <brand-mark></brand-mark>`);
</script>
</body>
</html>
